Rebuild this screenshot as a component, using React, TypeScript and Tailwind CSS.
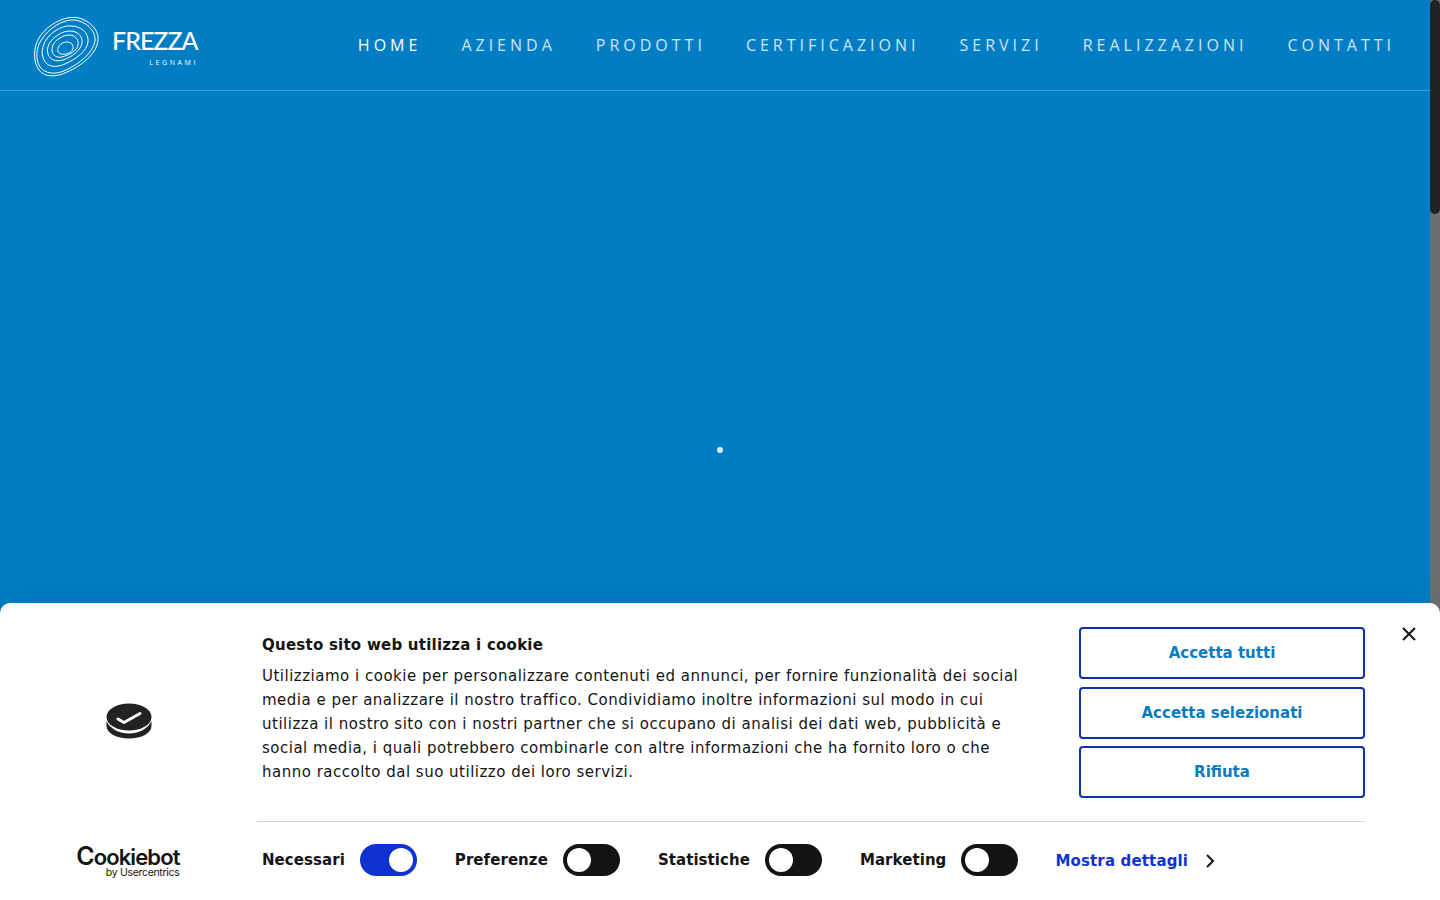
import React from 'react';

const navItems = ['HOME', 'AZIENDA', 'PRODOTTI', 'CERTIFICAZIONI', 'SERVIZI', 'REALIZZAZIONI', 'CONTATTI'];

function Rings() {
  return (
    <svg width="66" height="62" viewBox="0 0 66 62" fill="none" stroke="white" strokeWidth="1">
      <path d="M43 1.500C54 3 66 12 65 24C64 38 48 50 34 56C24 61 12 62 6 54C0 46 0 32 6 22C13 10 30 0 43 1.500Z" />
      <path d="M41 4C52 5 63 14 62 25C60 37 46 48 33 54C23 59 12 58 7 51C2 43 3 31 9 23C15 13 30 3 41 4Z" />
      <path d="M38 10C47 10 56 16 55 26C54 35 43 43 32 48C23 52 14 51 11 44C7 36 10 27 16 20C22 14 31 9 38 10Z" />
      <path d="M37 15C44 15 50 20 49 27C48 34 39 41 30 44C23 46 17 44 15 38C13 31 17 25 22 21C27 17 32 15 37 15Z" />
      <path d="M36 19C42 19 46 23 45 29C44 35 36 39 29 41C23 42 19 39 19 34C19 28 23 24 27 22C30 20 33 19 36 19Z" />
      <path d="M34 26C38 26 41 29 40 33C38 37 33 39 28 38C24 37 24 33 26 30C28 27 31 26 34 26Z" />
    </svg>
  );
}

function CookieIcon() {
  return (
    <svg width="46" height="36" viewBox="0 0 46 36">
      <ellipse cx="23" cy="14" rx="22.500" ry="13.500" fill="#222" />
      <path d="M0.500 18v5c0 7 10 12.500 22.500 12.500S45.500 30 45.500 23v-5c-3 7-12 12.500-22.500 12.500S3.500 25 0.500 18Z" fill="#222" />
      <path d="M12 16l6 3.500L34 10.500" fill="none" stroke="white" strokeWidth="3" strokeLinecap="round" strokeLinejoin="round" />
    </svg>
  );
}

function Toggle({ label, on }: { label: string; on?: boolean }) {
  return (
    <div className="flex items-center gap-[15px]">
      <span className="text-[15px] font-bold tracking-[0.06px] text-[#141414]">{label}</span>
      <span className={`flex h-8 w-[57px] items-center rounded-full px-1 ${on ? 'justify-end bg-[#1032cf]' : 'justify-start bg-[#141414]'}`}>
        <span className="h-6 w-6 rounded-full bg-white" />
      </span>
    </div>
  );
}

function ActionButton({ children, className = '' }: { children: React.ReactNode; className?: string }) {
  return (
    <button className={`h-[52px] w-full rounded-[4px] border-2 border-[#1032a8] bg-white text-[15px] font-bold text-[#0a7bc0] ${className}`}>
      {children}
    </button>
  );
}

export default function App() {
  return (
    <div className="relative flex h-[900px] w-[1440px] overflow-hidden bg-[#007dc3] font-['Open_Sans',sans-serif]">
      <div className="flex flex-1 flex-col">
        <header className="flex h-[91px] items-center justify-between border-b border-[#3c9fd8] pl-[33px] pr-[35px]">
          <div className="mt-[4px] flex items-center gap-[13px]">
            <Rings />
            <div className="flex w-[86px] flex-col items-end text-white">
              <span className="w-full text-[25px] font-medium leading-[26px] tracking-[-1px] font-['Lato',sans-serif]">FREZZA</span>
              <span className="mt-[6px] text-[7px] leading-[8px] tracking-[2.600px] font-['Open_Sans',sans-serif]">LEGNAMI</span>
            </div>
          </div>
          <nav className="flex gap-[40px] text-[16px] tracking-[4px]">
            {navItems.map((item, i) => (
              <a key={item} className={i === 0 ? 'text-white' : 'text-white/80'}>
                {item}
              </a>
            ))}
          </nav>
        </header>
        <div className="flex flex-1 items-center justify-center">
          <span className="mt-[-92px] ml-[10px] h-[6px] w-[6px] rounded-full bg-[#d8eefa]" />
        </div>
      </div>

      <div className="w-[10px] bg-[#6e6e6e]">
        <div className="h-[214px] rounded-full bg-[#222222]" />
      </div>

      {/* cookie banner */}
      <div className="absolute bottom-0 left-0 flex h-[297px] w-[1440px] rounded-t-[10px] bg-white text-[#141414] shadow-[0_32px_68px_rgba(0,0,0,0.3)] font-['DejaVu_Sans',sans-serif]">
        <div className="flex w-[257px] flex-col items-center pt-[100px]">
          <CookieIcon />
          <div className="mt-[107px] flex w-[102px] flex-col items-end">
            <span className="text-[22px] font-semibold leading-[20px] tracking-[-0.900px] font-['Inter',sans-serif]">
              <span className="text-[25px] leading-[20px]">C</span>ookiebot
            </span>
            <span className="text-[10.500px] leading-[11px] tracking-[-0.300px] font-['Inter',sans-serif]">by Usercentrics</span>
          </div>
        </div>
        <div className="flex w-[1108px] flex-col">
          <div className="flex h-[219px] justify-between border-b border-[#d6d6d6] pt-[24px] pl-[5px]">
            <div className="w-[770px] pt-[6px]">
              <h2 className="text-[15px] font-bold leading-[24px] tracking-[0.240px]">Questo sito web utilizza i cookie</h2>
              <p className="mt-[7px] text-[15px] leading-[24px] tracking-[0.500px]">
                Utilizziamo i cookie per personalizzare contenuti ed annunci, per fornire funzionalità dei social
                <br />
                media e per analizzare il nostro traffico. Condividiamo inoltre informazioni sul modo in cui
                <br />
                utilizza il nostro sito con i nostri partner che si occupano di analisi dei dati web, pubblicità e
                <br />
                social media, i quali potrebbero combinarle con altre informazioni che ha fornito loro o che
                <br />
                hanno raccolto dal suo utilizzo dei loro servizi.
              </p>
            </div>
            <div className="flex w-[286px] flex-col">
              <ActionButton>Accetta tutti</ActionButton>
              <ActionButton className="mt-2">Accetta selezionati</ActionButton>
              <ActionButton className="mt-[7px]">Rifiuta</ActionButton>
            </div>
          </div>
          <div className="flex items-center pt-[22px] pl-[5px]">
            <div className="flex gap-[38px]">
              <Toggle label="Necessari" on />
              <Toggle label="Preferenze" />
              <Toggle label="Statistiche" />
              <Toggle label="Marketing" />
            </div>
            <span className="ml-[37px] mt-[3px] text-[15px] font-bold tracking-[0.150px] text-[#1032cf]">Mostra dettagli</span>
            <svg className="ml-[17px] mt-[2px]" width="10" height="16" viewBox="0 0 10 16" fill="none" stroke="#141414" strokeWidth="2">
              <path d="M2 2l6 6-6 6" />
            </svg>
          </div>
        </div>
        <button className="absolute right-[24px] top-[24px]">
          <svg className="block" width="14" height="14" viewBox="0 0 14 14" stroke="#141414" strokeWidth="2">
            <path d="M1 1l12 12M13 1L1 13" />
          </svg>
        </button>
      </div>
    </div>
  );
}
